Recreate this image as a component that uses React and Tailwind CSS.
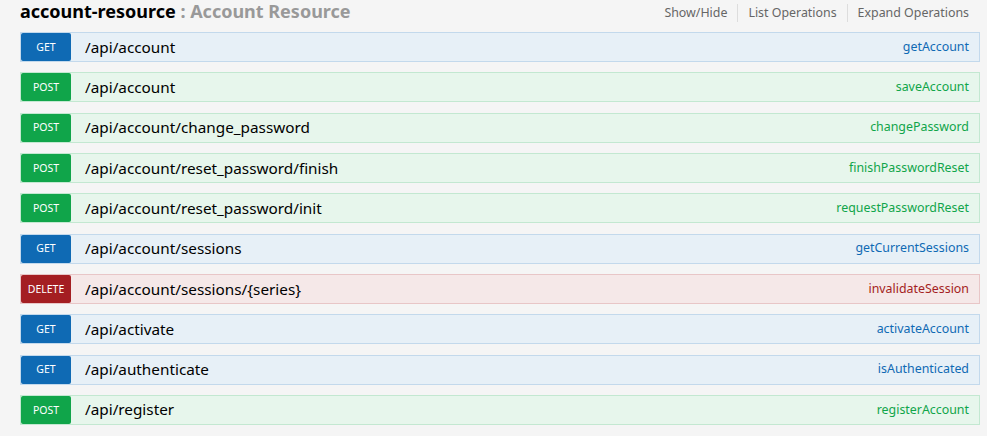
const OPS = [
  { method: 'GET', path: '/api/account', name: 'getAccount' },
  { method: 'POST', path: '/api/account', name: 'saveAccount' },
  { method: 'POST', path: '/api/account/change_password', name: 'changePassword' },
  { method: 'POST', path: '/api/account/reset_password/finish', name: 'finishPasswordReset' },
  { method: 'POST', path: '/api/account/reset_password/init', name: 'requestPasswordReset' },
  { method: 'GET', path: '/api/account/sessions', name: 'getCurrentSessions' },
  { method: 'DELETE', path: '/api/account/sessions/{series}', name: 'invalidateSession' },
  { method: 'GET', path: '/api/activate', name: 'activateAccount' },
  { method: 'GET', path: '/api/authenticate', name: 'isAuthenticated' },
  { method: 'POST', path: '/api/register', name: 'registerAccount' },
];

const STYLES = {
  GET: {
    row: 'bg-[#e7f0f7] border-[#c3d9ec]',
    badge: 'bg-[#0f6ab4]',
    name: 'text-[#0f6ab4]',
  },
  POST: {
    row: 'bg-[#e7f6ec] border-[#c3e8d1]',
    badge: 'bg-[#10a54a]',
    name: 'text-[#10a54a]',
  },
  DELETE: {
    row: 'bg-[#f5e8e8] border-[#e8c6c7]',
    badge: 'bg-[#a41e22]',
    name: 'text-[#a41e22]',
  },
};

function Operation({ op }) {
  const s = STYLES[op.method];
  return (
    <li className={`flex items-center h-[30px] border ${s.row}`}>
      <span
        className={`w-[50px] h-[28px] flex items-center justify-center pt-[1px] rounded-[2px] text-[10.5px] text-white ${s.badge}`}
      >
        {op.method}
      </span>
      <span className="ml-[14px] text-[15.3px] text-black">{op.path}</span>
      <span className={`ml-auto pr-[10px] text-[12.4px] ${s.name}`}>{op.name}</span>
    </li>
  );
}

export default function App() {
  return (
    <div className="w-[987px] h-[436px] bg-[#f5f5f5] pl-[20px] pr-[7px] overflow-hidden font-['Noto_Sans',sans-serif]">
      <div className="flex items-start justify-between h-[32px]">
        <h2 className="text-[18px] font-bold leading-[24px] -mt-[1px]">
          <span className="text-black">account-resource</span>
          <span className="text-[#999]"> : Account Resource</span>
        </h2>
        <ul className="flex items-center text-[12.4px] leading-[18px] text-[#666] mt-[4px] pr-[11px]">
          <li className="pr-[10px]">Show/Hide</li>
          <li className="px-[10px] border-l border-[#ddd]">List Operations</li>
          <li className="pl-[10px] border-l border-[#ddd]">Expand Operations</li>
        </ul>
      </div>
      <ul className="flex flex-col gap-[10.33px]">
        {OPS.map((op, i) => (
          <Operation key={i} op={op} />
        ))}
      </ul>
    </div>
  );
}
